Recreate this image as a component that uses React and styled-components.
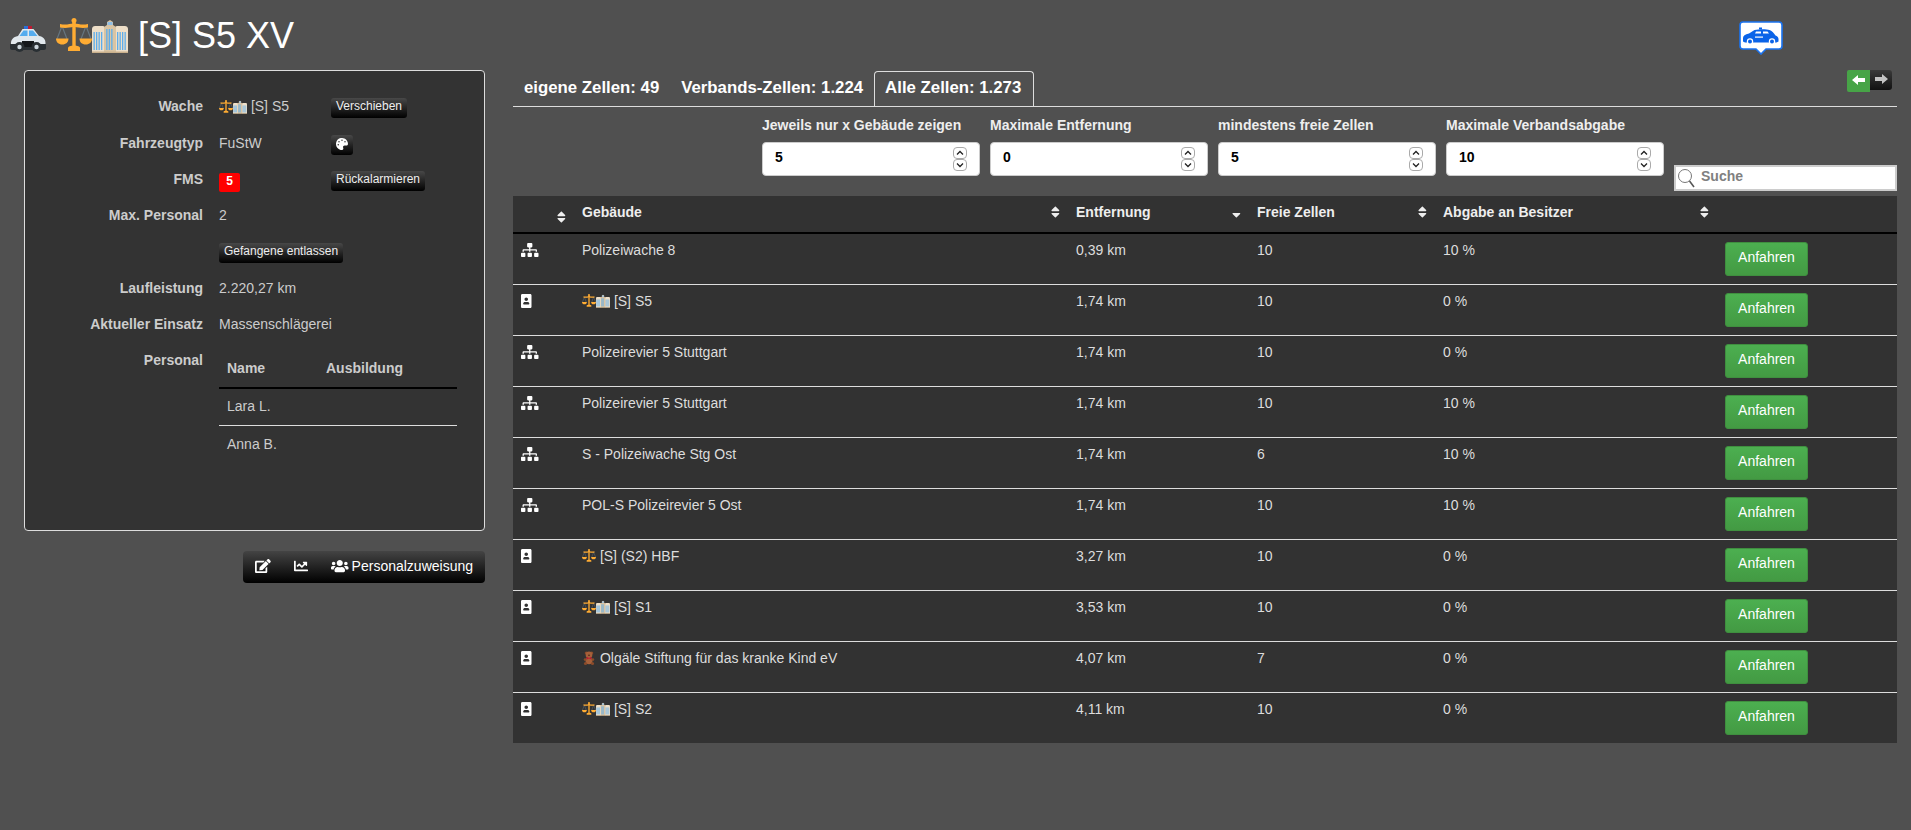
import React from "react";
import styled, { createGlobalStyle } from "styled-components";
import {
  FaEdit, FaChartLine, FaUsers, FaPalette, FaSitemap, FaPortrait,
  FaSort, FaSortDown,
} from "react-icons/fa";

const Global = createGlobalStyle`
  html, body { margin: 0; padding: 0; background: #505050; }
  body { font-family: "Liberation Sans", Arial, sans-serif; font-size: 14px; line-height: 20px; color: #ddd; min-height: 100vh; overflow: hidden; }
  * { box-sizing: border-box; }
`;

const Emoji = styled.svg`
  width: 1em; height: 1em; vertical-align: -0.167em; display: inline-block;
`;

const Glyph = styled.span`
  display: block;
  flex: none;
  line-height: 0;
  svg { display: block; width: ${(p) => p.$w}px; height: ${(p) => p.$h || 14}px; }
`;

const CarEmoji = () => (
  <Emoji viewBox="0 0 36 36">
    <path d="M14 8h4v3h-4z" fill="#2a6fd6" />
    <path d="M18 8h4v3h-4z" fill="#be1931" />
    <path d="M1 25c0-3 2-6 7-7l4.500-7h11l5.500 7c4 .5 6.500 3 6.500 7v2H1z" fill="#e1e8ed" />
    <path d="M9.500 18l4-5.500h4V18zM19 18v-5.500h4l4.500 5.500z" fill="#55acee" />
    <path d="M0 26h36v4c0 1-1 2-2 2H2c-1 0-2-1-2-2z" fill="#292f33" />
    <path d="M12 23h12v6H12z" fill="#14171a" />
    <circle cx="9.500" cy="29" r="5" fill="#292f33" />
    <circle cx="9.500" cy="29" r="2.200" fill="#ccd6dd" />
    <circle cx="26.500" cy="29" r="5" fill="#292f33" />
    <circle cx="26.500" cy="29" r="2.200" fill="#ccd6dd" />
  </Emoji>
);

const ScaleEmoji = () => (
  <Emoji viewBox="0 0 36 36">
    <path d="M6 8L1 21M6 8l5 13M30 8l-5 13M30 8l5 13" stroke="#66757f" strokeWidth="1.200" fill="none" />
    <circle cx="18" cy="2.500" r="2.500" fill="#ffac33" />
    <path d="M16.300 3h3.400v27h-3.400z" fill="#ffac33" />
    <path d="M4 6c5 1 9 .5 14-1 5 1.500 9 2 14 1v3.500c-5 .8-9 .5-14-1-5 1.500-9 1.800-14 1z" fill="#ffac33" />
    <path d="M0 20.500h12.500c0 3.800-2.500 6-6.200 6S0 24.300 0 20.500zM23.500 20.500H36c0 3.800-2.500 6-6.300 6s-6.200-2.200-6.200-6z" fill="#ffac33" />
    <path d="M12 30c0-1.500 2.500-2.500 6-2.500s6 1 6 2.500v3H12z" fill="#ffac33" />
  </Emoji>
);

const windows = (x0, n, y, h) =>
  Array.from({ length: n }, (_, i) => (
    <rect key={x0 + i} x={x0 + i * 2.500} y={y} width="1.300" height={h} fill="#5dadec" />
  ));

const BuildingEmoji = () => (
  <Emoji viewBox="0 0 36 36">
    <path d="M0 35V11c0-2 1.500-3 3-3h8c1 0 2 1 2 3v24z" fill="#eedfc8" />
    <path d="M23 35V11c0-2 1-3 2-3h8c1.500 0 3 1 3 3v24z" fill="#eedfc8" />
    <path d="M12 35V9l3-2V4l3-2 3 2v3l3 2v26z" fill="#d9c4a3" />
    <path d="M15.500 4h5v3h-5z" fill="#8fbfe6" />
    {windows(1.500, 4, 14, 18)}
    {windows(25, 4, 14, 18)}
    {windows(14.200, 3, 11, 21)}
    <path d="M0 33.500h36V35H0z" fill="#c9b08c" />
  </Emoji>
);

const TeddyEmoji = () => (
  <Emoji viewBox="0 0 36 36">
    <circle cx="11" cy="5" r="4" fill="#8a4b2a" />
    <circle cx="25" cy="5" r="4" fill="#8a4b2a" />
    <circle cx="18" cy="10" r="8.500" fill="#a5603a" />
    <ellipse cx="18" cy="25" rx="9" ry="9" fill="#a5603a" />
    <circle cx="9" cy="32" r="4" fill="#8a4b2a" />
    <circle cx="27" cy="32" r="4" fill="#8a4b2a" />
    <circle cx="8" cy="22" r="3.500" fill="#8a4b2a" />
    <circle cx="28" cy="22" r="3.500" fill="#8a4b2a" />
    <path d="M12 15l6 3 6-3v7l-6-3-6 3z" fill="#be1931" />
    <circle cx="18" cy="11" r="2" fill="#3a2012" />
  </Emoji>
);

const Page = styled.div`
  background: #505050;
  min-height: 830px;
`;

const Header = styled.header`
  display: flex;
  justify-content: space-between;
  align-items: flex-start;
  height: 70px;
  padding: 16px 128px 0 10px;
`;

const Title = styled.h1`
  margin: 0;
  font-size: 36px;
  line-height: 40px;
  font-weight: 400;
  color: #fff;
  white-space: pre;
`;

const Marker = styled.svg`
  width: 44px;
  height: 34px;
  margin-top: 5px;
  display: block;
`;

const Columns = styled.main`
  display: flex;
  gap: 28px;
  padding-left: 24px;
`;

const LeftColumn = styled.div`
  width: 461px;
  display: flex;
  flex-direction: column;
  align-items: flex-end;
`;

const RightColumn = styled.div`
  width: 1384px;
`;

const Panel = styled.section`
  width: 100%;
  height: 461px;
  background: #333;
  border: 1px solid #ddd;
  border-radius: 4px;
  padding-top: 25.3px;
  color: #ccc;
`;

const Row = styled.div`
  display: flex;
  min-height: 36.3px;
  align-items: flex-start;
`;

const Label = styled.div`
  width: 178px;
  margin-right: 16px;
  text-align: right;
  font-weight: 700;
  color: #ccc;
  flex: none;
`;

const Value = styled.div`
  width: ${(p) => (p.$wide ? "238px" : "112px")};
  flex: none;
  white-space: pre;
`;

const SmallButton = styled.button`
  display: flex;
  align-items: center;
  justify-content: center;
  height: 20px;
  margin-top: 2px;
  padding: 0 5px 4px;
  border: 0;
  border-radius: 3px;
  background: linear-gradient(#484848, #000);
  color: #eee;
  font: 400 12px/16px "Liberation Sans", Arial, sans-serif;
  white-space: nowrap;
  ${Glyph} { margin-top: 2px; color: #fff; }
`;

const Fms = styled.span`
  display: flex;
  align-items: center;
  justify-content: center;
  width: 21px;
  height: 19px;
  margin-top: 4px;
  padding-bottom: 3px;
  background: #f00;
  border-radius: 2px;
  color: #fff;
  font-size: 12px;
  font-weight: 700;
  line-height: 14px;
`;

const CrewTable = styled.table`
  width: 238px;
  margin-top: 1px;
  border-collapse: collapse;
  table-layout: fixed;
  th, td { padding: 7px 8px 9px; text-align: left; line-height: 20px; color: #ccc; }
  th { font-weight: 700; border-bottom: 2px solid #000; }
  tr + tr td { border-top: 1px solid #ddd; padding-top: 8px; }
  th:first-child { width: 99px; }
`;

const Toolbar = styled.div`
  display: flex;
  height: 32px;
  margin-top: 20px;
  border-radius: 4px;
  background: linear-gradient(#444, #000);
`;

const ToolButton = styled.button`
  display: flex;
  align-items: center;
  gap: 3px;
  height: 32px;
  margin-left: ${(p) => (p.$first ? 0 : -1)}px;
  padding: 0 12px 3px;
  border: 0;
  background: transparent;
  color: #fff;
  font: 400 14px/20px "Liberation Sans", Arial, sans-serif;
`;

const TabBar = styled.div`
  display: flex;
  justify-content: space-between;
  height: 37px;
  padding-top: 1px;
  border-bottom: 1px solid #ddd;
`;

const Tabs = styled.nav`
  display: flex;
  height: 36px;
`;

const Tab = styled.div`
  height: 36px;
  padding: 4px ${(p) => (p.$active ? 12 : 10)}px 0 10px;
  border: 1px solid ${(p) => (p.$active ? "#ddd" : "transparent")};
  border-bottom: 0;
  border-radius: 4px 4px 0 0;
  color: #fff;
  font-size: 16.8px;
  line-height: 24px;
  font-weight: 700;
`;

const Pager = styled.div`
  display: flex;
  align-items: flex-start;
  margin-top: -1px;
  margin-right: 5px;
`;

const PagerButton = styled.div`
  display: flex;
  align-items: center;
  justify-content: center;
  width: ${(p) => (p.$on ? 23 : 22)}px;
  height: ${(p) => (p.$on ? 22 : 20)}px;
  padding-bottom: 3px;
  border-radius: ${(p) => (p.$on ? "2px 0 0 2px" : "0 3px 3px 0")};
  background: ${(p) => (p.$on ? "#47a447" : "linear-gradient(#3a3a3a, #111)")};
  svg { width: 13px; height: 10px; fill: ${(p) => (p.$on ? "#fff" : "#c4c4c4")}; }
`;

const Filters = styled.form`
  display: flex;
  justify-content: flex-end;
  align-items: flex-end;
  gap: 10px;
  padding: 8px 0 5px;
  margin: 0;
`;

const Filter = styled.div`
  width: 218px;
  margin-bottom: 15px;
`;

const FilterLabel = styled.label`
  display: block;
  margin-bottom: 7px;
  font-weight: 700;
  color: #eee;
  white-space: nowrap;
`;

const NumberBox = styled.div`
  display: flex;
  align-items: center;
  height: 34px;
  padding: 0 11px 0 12px;
  background: #fff;
  border: 1px solid #ccc;
  border-radius: 4px;
`;

const NumberField = styled.input`
  flex: 1;
  min-width: 0;
  border: 0;
  outline: 0;
  padding: 0 0 4px;
  background: transparent;
  color: #000;
  font: 700 14px/20px "Liberation Sans", Arial, sans-serif;
`;

const Spinner = styled.div`
  display: flex;
  flex-direction: column;
  width: 14px;
  margin-right: 1px;
`;

const SpinStep = styled.span`
  display: flex;
  align-items: center;
  justify-content: center;
  height: 12px;
  border: 1px solid #aaa;
  border-radius: 4px;
  svg { width: 8px; height: 6px; }
`;

const SearchBox = styled.div`
  display: flex;
  align-items: center;
  gap: 5px;
  width: 223px;
  height: 26px;
  padding-left: 1px;
  background: #fff;
  border: 2px solid #ccc;
  svg { flex: none; }
`;

const SearchField = styled.input`
  flex: 1;
  min-width: 0;
  border: 0;
  outline: 0;
  padding: 0 0 4px;
  background: transparent;
  font: 700 14px/18px "Liberation Sans", Arial, sans-serif;
  &::placeholder { color: #808080; opacity: 1; }
`;

const Table = styled.table`
  width: 1384px;
  border-collapse: collapse;
  table-layout: fixed;
  background: #323232;
  th {
    position: relative;
    padding: 6px 8px 10px;
    text-align: left;
    font-weight: 700;
    color: #eee;
    line-height: 20px;
    border-bottom: 2px solid #000;
  }
  td {
    padding: 6px 8px 8px;
    vertical-align: top;
    color: #ddd;
    line-height: 20px;
    white-space: pre;
  }
  tbody tr + tr td { border-top: 1px solid #ddd; }
`;

const SortMark = styled.span`
  position: absolute;
  right: 8px;
  top: ${(p) => (p.$low ? 14 : 9)}px;
  color: #eee;
`;

const RowIcon = styled(Glyph)`
  margin-top: 3px;
  color: #fff;
`;

const ActionCell = styled.td`
  && { padding: 8px; }
`;

const Go = styled.button`
  display: block;
  height: 34px;
  width: 83px;
  padding: 0 0 4px;
  border: 1px solid #3f8f3f;
  border-radius: 3px;
  background: linear-gradient(#4caf50, #439a43);
  color: #fff;
  font: 400 14px/20px "Liberation Sans", Arial, sans-serif;
`;

const SortHead = ({ w, children, low, sorted }) => (
  <th style={{ width: w }}>
    {children}
    {w !== 180 && (
      <SortMark $low={low}>
        <Glyph $w={8.75}>{sorted ? <FaSortDown /> : <FaSort />}</Glyph>
      </SortMark>
    )}
  </th>
);

const Chevron = ({ up }) => (
  <svg viewBox="0 0 8 6">
    <path d={up ? "M1 4.500L4 1.500 7 4.500" : "M1 1.500L4 4.500 7 1.500"} stroke="#222" strokeWidth="1.300" fill="none" />
  </svg>
);

const NumberFilter = ({ label, value }) => (
  <Filter>
    <FilterLabel>{label}</FilterLabel>
    <NumberBox>
      <NumberField readOnly value={value} />
      <Spinner>
        <SpinStep><Chevron up /></SpinStep>
        <SpinStep><Chevron /></SpinStep>
      </Spinner>
    </NumberBox>
  </Filter>
);

const both = <><ScaleEmoji /><BuildingEmoji /></>;

const rows = [
  ["a", "Polizeiwache 8", "0,39 km", "10", "10 %"],
  ["p", <>{both} [S] S5</>, "1,74 km", "10", "0 %"],
  ["a", "Polizeirevier 5 Stuttgart", "1,74 km", "10", "0 %"],
  ["a", "Polizeirevier 5 Stuttgart", "1,74 km", "10", "10 %"],
  ["a", "S - Polizeiwache Stg Ost", "1,74 km", "6", "10 %"],
  ["a", "POL-S Polizeirevier 5 Ost", "1,74 km", "10", "10 %"],
  ["p", <><ScaleEmoji /> [S] (S2) HBF</>, "3,27 km", "10", "0 %"],
  ["p", <>{both} [S] S1</>, "3,53 km", "10", "0 %"],
  ["p", <><TeddyEmoji /> Olgäle Stiftung für das kranke Kind eV</>, "4,07 km", "7", "0 %"],
  ["p", <>{both} [S] S2</>, "4,11 km", "10", "0 %"],
];

export default function App() {
  return (
    <Page>
      <Global />
      <Header>
        <Title><CarEmoji /> <ScaleEmoji /><BuildingEmoji /> [S] S5 XV</Title>
        <Marker viewBox="0 0 44 34">
          <path d="M4 1h36a3 3 0 0 1 3 3v21a3 3 0 0 1-3 3H27l-5 5-5-5H4a3 3 0 0 1-3-3V4a3 3 0 0 1 3-3z" fill="#fff" stroke="#1a73f0" strokeWidth="1.600" />
          <path d="M20 6.500h3v2h-3z" fill="#0a63e8" />
          <path d="M4 17c0-2.500 2-3.500 6-4.500l5.500-3.500c5-1 12-1 15 0 2 .8 4.500 3 6 5.500 1.500.8 3 1.500 3 3.500v2.500l-2 1H6l-2-1z" fill="#0a63e8" />
          <path d="M17 10.500h5v2h-6zM24 10.500h4.500l1.500 2h-6z" fill="#fff" />
          <path d="M16 15.500h8v1.200h-8z" fill="#fff" />
          <circle cx="11" cy="20.500" r="3.200" fill="#fff" />
          <circle cx="11" cy="20.500" r="2" fill="#0a63e8" />
          <circle cx="33" cy="20.500" r="3.200" fill="#fff" />
          <circle cx="33" cy="20.500" r="2" fill="#0a63e8" />
        </Marker>
      </Header>
      <Columns>
        <LeftColumn>
          <Panel>
            <Row>
              <Label>Wache</Label>
              <Value>{both} [S] S5</Value>
              <SmallButton>Verschieben</SmallButton>
            </Row>
            <Row>
              <Label>Fahrzeugtyp</Label>
              <Value>FuStW</Value>
              <SmallButton><Glyph $w={12} $h={12}><FaPalette /></Glyph></SmallButton>
            </Row>
            <Row>
              <Label>FMS</Label>
              <Value><Fms>5</Fms></Value>
              <SmallButton>Rückalarmieren</SmallButton>
            </Row>
            <Row>
              <Label>Max. Personal</Label>
              <Value>2</Value>
            </Row>
            <Row>
              <Label />
              <Value $wide><SmallButton>Gefangene entlassen</SmallButton></Value>
            </Row>
            <Row>
              <Label>Laufleistung</Label>
              <Value $wide>2.220,27 km</Value>
            </Row>
            <Row>
              <Label>Aktueller Einsatz</Label>
              <Value $wide>Massenschlägerei</Value>
            </Row>
            <Row>
              <Label>Personal</Label>
              <Value $wide>
                <CrewTable>
                  <thead>
                    <tr><th>Name</th><th>Ausbildung</th></tr>
                  </thead>
                  <tbody>
                    <tr><td>Lara L.</td><td /></tr>
                    <tr><td>Anna B.</td><td /></tr>
                  </tbody>
                </CrewTable>
              </Value>
            </Row>
          </Panel>
          <Toolbar>
            <ToolButton $first><Glyph $w={15.75}><FaEdit /></Glyph></ToolButton>
            <ToolButton><Glyph $w={14}><FaChartLine /></Glyph></ToolButton>
            <ToolButton><Glyph $w={17.5}><FaUsers /></Glyph>Personalzuweisung</ToolButton>
          </Toolbar>
        </LeftColumn>
        <RightColumn>
          <TabBar>
            <Tabs>
              <Tab>eigene Zellen: 49</Tab>
              <Tab>Verbands-Zellen: 1.224</Tab>
              <Tab $active>Alle Zellen: 1.273</Tab>
            </Tabs>
            <Pager>
              <PagerButton $on>
                <svg viewBox="0 0 13 10"><path d="M0 5l6-5v3h7v4H6v3z" /></svg>
              </PagerButton>
              <PagerButton>
                <svg viewBox="0 0 13 10"><path d="M13 5L7 0v3H0v4h7v3z" /></svg>
              </PagerButton>
            </Pager>
          </TabBar>
          <Filters>
            <NumberFilter label="Jeweils nur x Gebäude zeigen" value="5" />
            <NumberFilter label="Maximale Entfernung" value="0" />
            <NumberFilter label="mindestens freie Zellen" value="5" />
            <NumberFilter label="Maximale Verbandsabgabe" value="10" />
            <SearchBox>
              <svg width="19" height="20" viewBox="0 0 19 20">
                <circle cx="8" cy="8" r="6.500" fill="none" stroke="#777" strokeWidth="1" />
                <path d="M12.500 13L17 19" stroke="#555" strokeWidth="1.500" />
              </svg>
              <SearchField placeholder="Suche" />
            </SearchBox>
          </Filters>
          <Table>
            <thead>
              <tr>
                <SortHead w={61} low />
                <SortHead w={494}>Gebäude</SortHead>
                <SortHead w={181} sorted>Entfernung</SortHead>
                <SortHead w={186}>Freie Zellen</SortHead>
                <SortHead w={282}>Abgabe an Besitzer</SortHead>
                <SortHead w={180} />
              </tr>
            </thead>
            <tbody>
              {rows.map((r, i) => (
                <tr key={i}>
                  <td>
                    {r[0] === "a"
                      ? <RowIcon $w={17.5}><FaSitemap /></RowIcon>
                      : <RowIcon $w={10.5}><FaPortrait /></RowIcon>}
                  </td>
                  <td>{r[1]}</td>
                  <td>{r[2]}</td>
                  <td>{r[3]}</td>
                  <td>{r[4]}</td>
                  <ActionCell><Go>Anfahren</Go></ActionCell>
                </tr>
              ))}
            </tbody>
          </Table>
        </RightColumn>
      </Columns>
    </Page>
  );
}
